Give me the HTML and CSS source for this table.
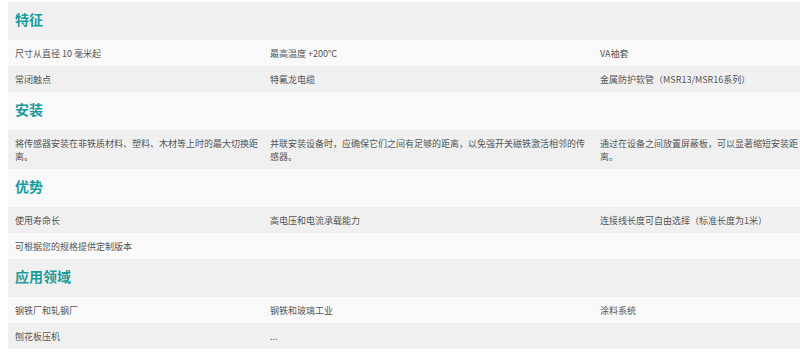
FILE: index.html
```html
<!DOCTYPE html>
<html lang="zh-CN">
<head>
<meta charset="utf-8">
<title>特征</title>
<link rel="stylesheet" href="styles.css">
</head>
<body>
<table class="spec">
  <colgroup>
    <col class="c1">
    <col class="c2">
    <col class="c3">
  </colgroup>
  <tbody>
    <tr class="head"><td colspan="3">特征</td></tr>
    <tr><td>尺寸从直径 10 毫米起</td><td>最高温度 +200°C</td><td>VA袖套</td></tr>
    <tr><td>常闭触点</td><td>特氟龙电缆</td><td>金属防护软管（MSR13/MSR16系列）</td></tr>
    <tr class="head"><td colspan="3">安装</td></tr>
    <tr><td>将传感器安装在非铁质材料、塑料、木材等上时的最大切换距离。</td><td>并联安装设备时，应确保它们之间有足够的距离，以免强开关磁铁激活相邻的传感器。</td><td>通过在设备之间放置屏蔽板，可以显著缩短安装距离。</td></tr>
    <tr class="head"><td colspan="3">优势</td></tr>
    <tr><td>使用寿命长</td><td>高电压和电流承载能力</td><td>连接线长度可自由选择（标准长度为1米）</td></tr>
    <tr><td>可根据您的规格提供定制版本</td><td></td><td></td></tr>
    <tr class="head"><td colspan="3">应用领域</td></tr>
    <tr><td>钢铁厂和轧钢厂</td><td>钢铁和玻璃工业</td><td>涂料系统</td></tr>
    <tr><td>刨花板压机</td><td>...</td><td></td></tr>
  </tbody>
</table>
</body>
</html>
```

FILE: styles.css
```css
html, body {
  background: #ffffff;
}
body {
  margin: 2px 0 0 8px;
  overflow: hidden;
  font-family: "Noto Sans CJK SC", "Noto Sans", sans-serif;
}
.spec {
  width: 792px;
  border-collapse: collapse;
  table-layout: fixed;
}
.c1 { width: 255px; }
.c2 { width: 330px; }
.c3 { width: 207px; }
.spec td {
  padding: 6.5px 2px 6.5px 7px;
  font-size: 9px;
  line-height: 13px;
  color: #555555;
  vertical-align: top;
}
.spec td:nth-child(3) {
  padding-right: 0;
}
.spec tr:nth-child(odd) {
  background: #f0f0f0;
}
.spec tr:nth-child(even) {
  background: #f9f9f9;
}
.spec tr.head td {
  padding: 7px 7px 11px;
  font-size: 14px;
  line-height: 20px;
  font-weight: 700;
  color: #1a9b9b;
}
```
